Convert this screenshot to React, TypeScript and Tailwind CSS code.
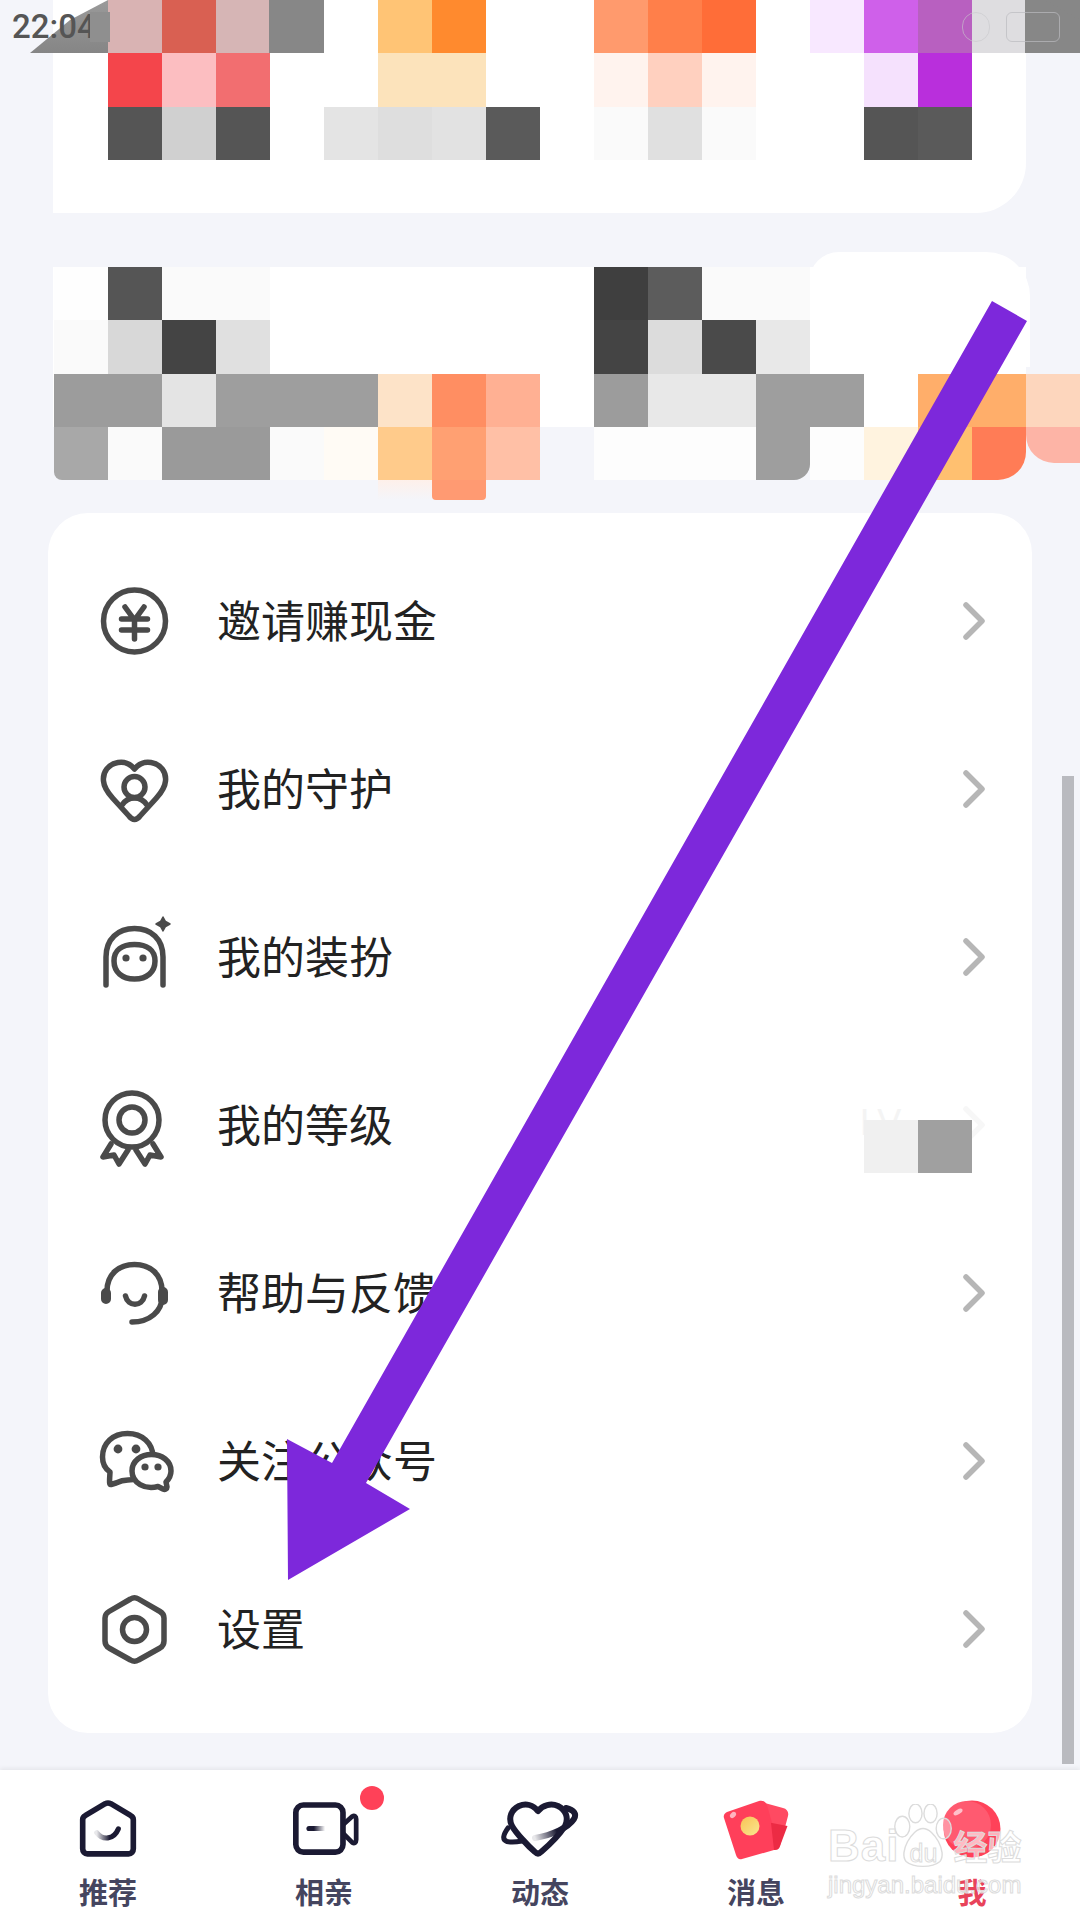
import { ReactNode } from 'react';

const font = "font-['Noto_Sans_CJK_SC','Noto_Sans',sans-serif]";

// mosaic cells, one string per 54px column, '' = leave the card showing
const topCells = [
  ['', '', 'bg-[#d9b3b3]', 'bg-[#d96052]', 'bg-[#d6b5b5]', 'bg-[#878787]', '', 'bg-[#ffc475]', 'bg-[#ff8a2e]', '', '', 'bg-[#ff9a6d]', 'bg-[#ff7f4a]', 'bg-[#ff6d38]', '', 'bg-[#f8e8ff]', 'bg-[#cf60ea]', 'bg-[#b860c0]', 'bg-[#dedde0]', 'bg-[#878787]'],
  ['', '', 'bg-[#f4454b]', 'bg-[#fcbec1]', 'bg-[#f26e70]', '', '', 'bg-[#fce3bb]', 'bg-[#fce3bb]', '', '', 'bg-[#fff3ee]', 'bg-[#ffd0bf]', 'bg-[#fff3ee]', '', '', 'bg-[#f5e1fd]', 'bg-[#b92fdc]', '', ''],
  ['', '', 'bg-[#555555]', 'bg-[#d0d0d0]', 'bg-[#555555]', '', 'bg-[#e4e4e4]', 'bg-[#dedede]', 'bg-[#e2e2e2]', 'bg-[#5a5a5a]', '', 'bg-[#fafafa]', 'bg-[#e0e0e0]', 'bg-[#fafafa]', '', '', 'bg-[#555555]', 'bg-[#5a5a5a]', '', ''],
];

const midCells = [
  ['', 'bg-[#fefefe]', 'bg-[#555555]', 'bg-[#fafafa]', 'bg-[#fafafa]', '', '', '', '', '', '', 'bg-[#3f3f3f]', 'bg-[#5c5c5c]', 'bg-[#fafafa]', 'bg-[#fafafa]', '', '', '', '', ''],
  ['', 'bg-[#fafafa]', 'bg-[#d8d8d8]', 'bg-[#444444]', 'bg-[#e0e0e0]', '', '', '', '', '', '', 'bg-[#444444]', 'bg-[#dcdcdc]', 'bg-[#4a4a4a]', 'bg-[#e8e8e8]', '', '', '', '', ''],
  ['', 'bg-[#9c9c9c]', 'bg-[#9c9c9c]', 'bg-[#e4e4e4]', 'bg-[#9e9e9e]', 'bg-[#9e9e9e]', 'bg-[#9e9e9e]', 'bg-[#fde3c8]', 'bg-[#ff8e62]', 'bg-[#ffb093]', '', 'bg-[#9c9c9c]', 'bg-[#e8e8e8]', 'bg-[#e8e8e8]', 'bg-[#9e9e9e]', 'bg-[#9e9e9e]', '', 'bg-[#ffae6a]', 'bg-[#ffae6a]', 'bg-[#fdd6bd]'],
  ['', 'bg-[#a8a8a8] rounded-bl-lg', 'bg-[#fafafa]', 'bg-[#9a9a9a]', 'bg-[#9a9a9a]', 'bg-[#fafafa]', 'bg-[#fffbf5]', 'bg-[#ffcb8b]', 'bg-[#ffa072]', 'bg-[#ffc0a6]', '', 'bg-[#fdfdfd]', 'bg-[#fdfdfd]', 'bg-[#fdfdfd]', 'bg-[#9e9e9e] rounded-br-2xl', 'bg-[#fdfdfd]', 'bg-[#fff3df]', 'bg-[#ffc070]', 'bg-[#ff7c56] rounded-br-[28px]', 'bg-[#fdb4a6] rounded-bl-[28px] h-[36px]'],
  ['', '', '', '', '', '', '', 'bg-gradient-to-b from-[#fef0ea] to-[#f4f5fa]', 'bg-[#ff9a72] rounded-b-sm', '', '', '', '', '', '', '', '', '', '', ''],
];

function Mosaic({ rows }: { rows: string[][] }) {
  return (
    <div className="grid grid-cols-[repeat(20,54px)] auto-rows-[53.33px] w-[1080px] h-0">
      {rows.flat().map((c, i) => (
        <div key={i} className={i >= 80 ? `${c} h-[20px]` : c} />
      ))}
    </div>
  );
}

const Ico = ({ children }: { children: ReactNode }) => (
  <svg width="76" height="76" viewBox="0 0 76 76" fill="none" stroke="#4a4a4a" strokeWidth="5.5" strokeLinecap="round" strokeLinejoin="round" className="shrink-0 overflow-visible">
    {children}
  </svg>
);

const menu: { label: string; icon: ReactNode }[] = [
  {
    label: '邀请赚现金',
    icon: (
      <Ico>
        <circle cx="38.5" cy="38" r="31" />
        <path d="M29 24 38.5 37 48 24M25.5 36H51.5M25.5 47H51.5M38.5 37V56" />
      </Ico>
    ),
  },
  {
    label: '我的守护',
    icon: (
      <Ico>
        <path d="M38.5 18C34 12.5 28 10.5 22 11.5 12.5 13 6.5 21 7.5 30 8 37 12 42 17 47.5L33 65C36.5 69.5 40.5 69.5 44 65L60 47.5C65 42 69 37 69.5 30 70.5 21 64.5 13 55 11.5 49 10.5 43 12.5 38.5 18Z" />
        <circle cx="38.5" cy="36" r="10.5" />
        <path d="M26 54C29 49.5 33 47 38.5 47 44 47 48 49.5 51 54" />
      </Ico>
    ),
  },
  {
    label: '我的装扮',
    icon: (
      <Ico>
        <path d="M10 66V38C10 20 22 9.5 38.5 9.5 55 9.5 67 20 67 38V66" />
        <path d="M18 42C18 31 26 25.5 38.5 25.5 51 25.5 59 31 59 42 59 53 51 60 38.5 60 26 60 18 53 18 42Z" />
        <circle cx="30" cy="39" r="3.6" fill="#4a4a4a" stroke="none" />
        <circle cx="47" cy="39" r="3.6" fill="#4a4a4a" stroke="none" />
        <path d="M67 -2 69.5 2.5 74 5 69.5 7.5 67 12 64.5 7.5 60 5 64.5 2.5Z" fill="#4a4a4a" stroke="#4a4a4a" strokeWidth="1.5" />
      </Ico>
    ),
  },
  {
    label: '我的等级',
    icon: (
      <Ico>
        <circle cx="36" cy="33" r="27" />
        <circle cx="36" cy="33" r="13" />
        <path d="M15 57 7 70 18 68 23 77 32 63M57 57 65 70 54 68 49 77 40 63" />
      </Ico>
    ),
  },
  {
    label: '帮助与反馈',
    icon: (
      <Ico>
        <path d="M11 36C11 19 23 9.5 38.5 9.5 54 9.5 66 19 66 36V42C66 56 54 67 36 67" />
        <path d="M10 38V44M67 37V45" strokeWidth="10" />
        <path d="M29.5 41C32 52 46 52 48.5 41" />
      </Ico>
    ),
  },
  {
    label: '关注公众号',
    icon: (
      <Ico>
        <path d="M14 49C8 45 6.5 39 6.5 34 6.5 20 17 10.5 31.5 10.5 46 10.5 57 20 57 34 57 48 46 57 32 57 28 57 24 58 20 60L15 61.5C13 62 13.5 58 14 49Z" />
        <circle cx="22" cy="26" r="4.4" fill="#4a4a4a" stroke="none" />
        <circle cx="40" cy="26" r="4.4" fill="#4a4a4a" stroke="none" />
        <path d="M36 48C36 38 45 31.5 55.5 31.5 66 31.5 75 38 75 48 75 53 73 56 70 59L71 64C71 66 69 67 67 66L62 63.5C49 67 36 60 36 48Z" fill="#fff" />
        <circle cx="49" cy="44" r="3.6" fill="#4a4a4a" stroke="none" />
        <circle cx="62" cy="44" r="3.6" fill="#4a4a4a" stroke="none" />
      </Ico>
    ),
  },
  {
    label: '设置',
    icon: (
      <Ico>
        <path d="M34.5 8C37 6.5 40 6.5 42.5 8L64 20.5C66.5 22 68 24.5 68 27V50C68 53 66.5 55.5 64 57L42.5 69C40 70.5 37 70.5 34.5 69L13 57C10.5 55.5 9 53 9 50V27C9 24.5 10.5 22 13 20.5Z" />
        <circle cx="38.5" cy="38.5" r="12" />
      </Ico>
    ),
  },
];

function MenuRow({ label, icon, level }: { label: string; icon: ReactNode; level?: boolean }) {
  return (
    <div className="relative h-[168px] flex items-center pl-[48px] pr-[47px]">
      {icon}
      <span className="ml-[45px] -mt-[5px] text-[44px] leading-none text-[#222222]">{label}</span>
      <svg width="22" height="38" viewBox="0 0 22 38" fill="none" stroke={level ? '#f7f7f7' : '#b6b6b6'} strokeWidth="5.5" strokeLinecap="round" strokeLinejoin="round" className="ml-auto">
        <path d="M3 3 19 19 3 35" />
      </svg>
      {level && (
        <>
          <span className="absolute left-[812px] top-[62px] text-[36px] leading-[40px] text-[#f4f4f4] font-['Liberation_Sans',sans-serif]">LV.</span>
          <div className="absolute left-[816px] top-[79px] flex">
            <div className="w-[54px] h-[53px] bg-[#f0f0f0]" />
            <div className="w-[54px] h-[53px] bg-[#a0a0a0]" />
          </div>
        </>
      )}
    </div>
  );
}

function NavItem({ label, active, children }: { label: string; active?: boolean; children: ReactNode }) {
  return (
    <div className="flex-1 flex flex-col items-center pt-[23px]">
      <div className="h-[72px] w-[96px] flex items-center justify-center relative">{children}</div>
      <span className={`mt-[7px] text-[29px] leading-[38px] font-bold ${active ? 'text-[#e8435a]' : 'text-[#45455f]'}`}>{label}</span>
    </div>
  );
}

export default function App() {
  return (
    <div className={`relative w-[1080px] h-[1920px] overflow-hidden bg-[#f4f5fa] flex flex-col ${font}`}>
      {/* first pixelated card */}
      <div className="ml-[53px] w-[973px] h-[213px] bg-white rounded-br-[50px] shrink-0">
        <div className="-ml-[53px]">
          <Mosaic rows={topCells} />
        </div>
      </div>

      {/* second pixelated card */}
      <div className="relative mt-[54px] ml-[53px] w-[973px] h-[160px] bg-white shrink-0">
        <div className="absolute left-[756px] right-[-4px] -top-[15px] h-[115px] bg-white rounded-tr-[44px] rounded-tl-[30px]" />
        <div className="relative -ml-[53px]">
          <Mosaic rows={midCells} />
        </div>
      </div>

      {/* menu card */}
      <div className="mt-[86px] mx-[48px] h-[1220px] bg-white rounded-[40px] pt-[24px] shrink-0">
        {menu.map((m) => (
          <MenuRow key={m.label} label={m.label} icon={m.icon} level={m.label === '我的等级'} />
        ))}
      </div>

      {/* bottom tabs */}
      <div className="mt-[37px] h-[150px] bg-white flex shrink-0 shadow-[0_-2px_4px_rgba(0,0,0,0.06)]">
        <NavItem label="推荐">
          <svg width="60" height="60" viewBox="0 0 64 64" fill="none">
            <path d="M5 22C5 20 6 18.5 8 17.5L29 5C31 4 33 4 35 5L56 17.5C58 18.5 59 20 59 22V53C59 56 57 58.5 54 58.5H10C7 58.5 5 56 5 53Z" stroke="#1b1a33" strokeWidth="6" strokeLinejoin="round" />
            <path d="M20 36C26 44 38 44 43 32" stroke="url(#homeFade)" strokeWidth="5.5" strokeLinecap="round" />
            <defs>
              <linearGradient id="homeFade" x1="20" x2="43" y1="0" y2="0" gradientUnits="userSpaceOnUse">
                <stop offset="0" stopColor="#1b1a33" stopOpacity="0.1" />
                <stop offset="0.6" stopColor="#1b1a33" />
              </linearGradient>
            </defs>
          </svg>
        </NavItem>
        <NavItem label="相亲">
          <svg width="66" height="54" viewBox="0 0 70 57" fill="none" className="ml-[4px]">
            <rect x="3" y="3" width="50" height="50" rx="8" stroke="#1b1a33" strokeWidth="6" />
            <path d="M53 24 63 15C65 14 67 15 67 18V40C67 43 65 44 63 43L53 33" stroke="#1b1a33" strokeWidth="5" strokeLinejoin="round" />
            <path d="M17 28H33" stroke="url(#camFade)" strokeWidth="5.5" strokeLinecap="round" />
            <defs>
              <linearGradient id="camFade" x1="17" x2="34" y1="0" y2="0" gradientUnits="userSpaceOnUse">
                <stop offset="0.3" stopColor="#1b1a33" />
                <stop offset="1" stopColor="#1b1a33" stopOpacity="0" />
              </linearGradient>
            </defs>
          </svg>
          <span className="absolute left-[84px] top-[-7px] w-[24px] h-[24px] rounded-full bg-[#ff4158]" />
        </NavItem>
        <NavItem label="动态">
          <svg width="76" height="54" viewBox="0 0 76 54" fill="none" className="overflow-visible">
            <path d="M6 26C1 33 0 38 5 39.5 9 40.5 15 40 20 39" stroke="#1b1a33" strokeWidth="5" strokeLinecap="round" />
            <path d="M64 6C72 8 75 12 72 17 66 26 50 33 33 36" stroke="url(#ringFade)" strokeWidth="6" strokeLinecap="round" />
            <path d="M36 9C31 3 24 1 17 4 9 8 6 16 10 24 14 31 26 44 33 50 35 52 37 52 39 50 46 44 58 32 63 24 67 16 64 8 56 4 49 1 41 3 36 9Z" stroke="#1b1a33" strokeWidth="6" strokeLinejoin="round" />
            <defs>
              <linearGradient id="ringFade" x1="64" x2="33" y1="26" y2="36" gradientUnits="userSpaceOnUse">
                <stop offset="0.3" stopColor="#1b1a33" />
                <stop offset="1" stopColor="#1b1a33" stopOpacity="0.1" />
              </linearGradient>
            </defs>
          </svg>
        </NavItem>
        <NavItem label="消息">
          <svg width="66" height="61" viewBox="0 0 66 61" fill="none">
            <defs>
              <linearGradient id="coin" x1="20" x2="34" y1="20" y2="36" gradientUnits="userSpaceOnUse">
                <stop offset="0" stopColor="#f9c75c" />
                <stop offset="1" stopColor="#f9e48c" />
              </linearGradient>
            </defs>
            <path d="M38 3 60 9C64 10 66 13 65 17L57 47C56 50 54 51 51 51L30 30Z" fill="#ff4a62" />
            <path d="M1 19C0 16 2 14 4 13L36 2C40 1 43 3 44 6L55 45C56 48 54 50 51 51L19 60C16 61 14 59 13 56Z" fill="#ff3f5a" />
            <path d="M49 24 64.5 27 57 47C56 50 54 51 51 51L48 24Z" fill="#ec2b44" />
            <circle cx="27" cy="27" r="9.5" fill="url(#coin)" />
            <ellipse cx="10" cy="16" rx="3.5" ry="2.5" transform="rotate(-45 10 16)" fill="#ffb3bf" />
          </svg>
        </NavItem>
        <NavItem label="我" active>
          <svg width="58" height="58" viewBox="0 0 58 58">
            <circle cx="29" cy="29" r="28.5" fill="#ff4259" />
            <circle cx="24" cy="25" r="24" fill="#ff5a70" />
            <ellipse cx="15" cy="12" rx="5" ry="2.4" transform="rotate(-30 15 12)" fill="#ffc0ca" />
          </svg>
        </NavItem>
      </div>

      {/* scrollbar */}
      <div className="absolute left-[1062px] top-[776px] w-[12px] h-[988px] bg-[#b9babf]" />

      {/* status bar, partly smeared by the blur in the screenshot */}
      <svg className="absolute left-0 top-0" width="1080" height="54" viewBox="0 0 1080 54">
        <defs>
          <linearGradient id="blurL" x1="0" x2="0" y1="0" y2="54" gradientUnits="userSpaceOnUse">
            <stop offset="0" stopColor="#9a9a9a" />
            <stop offset="1" stopColor="#858585" />
          </linearGradient>
        </defs>
        <path d="M30 53 70 20 108 0V53Z" fill="url(#blurL)" />
        <path d="M1025 0H1045L1080 20V53H1025Z" fill="#878787" />
        <path d="M269 0H316L308 8 322 53H269Z" fill="#878787" />
      </svg>
      <div className="absolute inset-x-0 top-[12px] h-[30px] pl-[12px] pr-[20px] flex items-center">
        <span className="font-['Roboto',sans-serif] font-medium text-[33px] leading-[38px] text-[#555555]">22:04</span>
        <div className="ml-[-6px] w-[20px] h-[30px] bg-[#8f8f8f]" />
        <div className="ml-auto w-[28px] h-[30px] rounded-full border border-[#c8c8cc] opacity-60" />
        <div className="ml-[16px] w-[54px] h-[30px] rounded-md border border-[#bbbbbf] opacity-70" />
      </div>

      {/* tutorial arrow drawn over the screenshot */}
      <svg className="absolute left-0 top-0 pointer-events-none" width="1080" height="1920" viewBox="0 0 1080 1920">
        <polygon points="992,301 1027,321 366,1483 410,1509 288,1580 287,1439 332,1463" fill="#7d28db" />
      </svg>

      {/* baidu watermark */}
      <div className="absolute left-[828px] top-[1804px] flex flex-col text-white/60 [-webkit-text-stroke:1px_#dcdcdc] font-['Liberation_Sans',sans-serif]">
        <div className="flex items-end h-[64px]">
          <span className="text-[44px] leading-[44px] font-bold tracking-[1px] -mr-[8px]">Bai</span>
          <div className="relative w-[64px] h-[64px] flex items-end justify-center">
            <svg className="absolute inset-0" width="64" height="64" viewBox="0 0 64 68" fill="#ffffff" fillOpacity="0.35" stroke="#dcdcdc" strokeWidth="1.5">
              <ellipse cx="10" cy="24" rx="8" ry="11" />
              <ellipse cx="24" cy="10" rx="7" ry="10" />
              <ellipse cx="40" cy="10" rx="7" ry="10" />
              <ellipse cx="54" cy="26" rx="8" ry="11" />
              <path d="M32 26C20 26 6 52 14 61 22 68 42 68 50 61 58 52 44 26 32 26Z" />
            </svg>
            <span className="relative text-[25px] leading-[30px]">du</span>
          </div>
          <span className={`ml-[-2px] text-[34px] leading-[44px] font-bold ${font}`}>经验</span>
        </div>
        <span className="mt-[4px] text-[24px] leading-[26px] whitespace-nowrap">jingyan.baidu.com</span>
      </div>
    </div>
  );
}
